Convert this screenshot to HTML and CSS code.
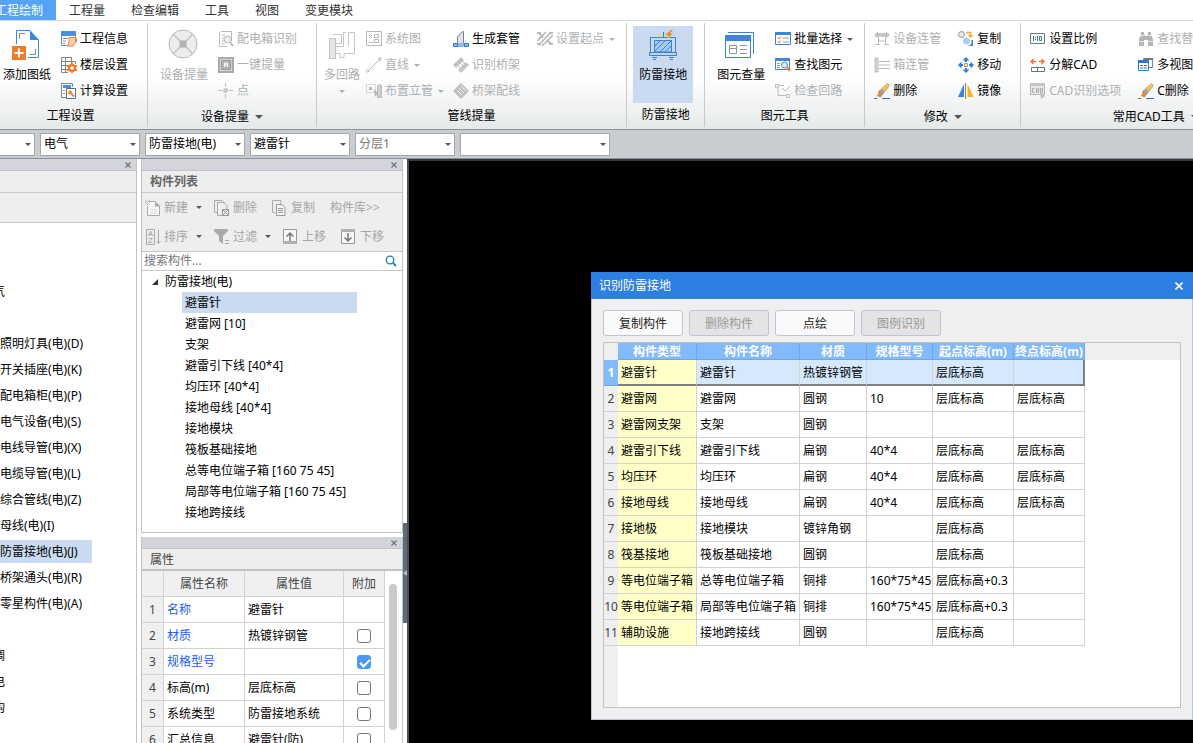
FILE: index.html
```html
<!DOCTYPE html>
<html lang="zh-CN">
<head>
<meta charset="utf-8">
<title>工程绘制</title>
<link rel="stylesheet" href="styles.css">
</head>
<body>
<nav class="tabs">
  <button class="tab active">工程绘制</button><button class="tab">工程量</button><button class="tab">检查编辑</button><button class="tab">工具</button><button class="tab">视图</button><button class="tab">变更模块</button>
</nav>

<div class="ribbon">
  <section class="group g-project">
    <div class="group-body">
      <button class="big"><svg class="i32" viewBox="0 0 32 32"><path d="M5.5 16V2.500H19M27.500 12v17.500H17" fill="none" stroke="#3b8ad8"/><path d="M19 2l9 10h-9z" fill="#3b8ad8"/><path d="M8.500 11V5.500H14M19 26.500h5.500V21" fill="none" stroke="#7a858f"/><path d="M1 18h14v14H1z" fill="#f07c28"/><path d="M8 20.500v9M3.500 25h9" stroke="#fff" stroke-width="2"/></svg><span>添加图纸</span></button>
      <div class="col">
        <button class="cmd"><svg class="i16" viewBox="0 0 16 16"><path d="M.5.500h14V6M.500 0v14.500H6" fill="none" stroke="#5f8fc8"/><path d="M0 0h15v5H0z" fill="#4a90e2"/><path d="M2 7.500h5M2 10h3M2 12.500h2" stroke="#8a949e"/><path d="M8 6.500h6.500v5L12 15H6.500L8 12z" fill="#fbd3b4" stroke="#f07c28"/><path d="M14 6v5h2V8z" fill="#f07c28"/></svg>工程信息</button>
        <button class="cmd"><svg class="i16" viewBox="0 0 16 16"><path d="M.5.500V15.500H7M.500.500h10V6M4.500 1v14M.500 4.500H14.500V7M.500 8.500H8M.500 12.500H7" fill="none" stroke="#7b8791"/><circle cx="11" cy="11" r="3" fill="#fff" stroke="#f07c28" stroke-width="2.400"/><path d="M11 5.500v2M11 14.500v2M6 8.500l2 1M14 12.500l2 1M6 13.500l2-1M14 9.500l2-1" stroke="#f07c28" stroke-width="2"/></svg>楼层设置</button>
        <button class="cmd"><svg class="i16" viewBox="0 0 16 16"><path d="M.500 0.500h11V4M.500 0v14.500H5" fill="none" stroke="#7b8791"/><path d="M2 2h8v3H2z" fill="#4a90e2"/><path d="M2 7.500h2M2 10.500h2" stroke="#f07c28"/><path d="M5.500 5.500h9v10h-9z" fill="#fff" stroke="#5a6f86"/><path d="M8 8l5 5.500" stroke="#f08a30" stroke-width="2"/><path d="M7.500 11l3-3" stroke="#f08a30" stroke-width="2"/></svg>计算设置</button>
      </div>
    </div>
    <h2 class="group-title">工程设置</h2>
  </section>

  <section class="group g-device">
    <div class="group-body">
      <button class="big" disabled><svg class="i32" viewBox="0 0 32 32"><circle cx="15" cy="16" r="14" fill="#ededed" stroke="#b9b9b9"/><path d="M5 6l20 20M25 6L5 26" stroke="#c4c4c4" stroke-width="1.500"/><path d="M11.500 12.500h7v7h-7z" fill="#b3b3b3"/></svg><span>设备提量</span></button>
      <div class="col">
        <button class="cmd" disabled><svg class="i16" viewBox="0 0 16 16"><path d="M3 0.500h10.500V10M3 .500L1.500 2v13.500H9M4 4h3M4 7h2M4 10h2M4 13h3" fill="none" stroke="#bbb"/><circle cx="9.500" cy="8.500" r="3.500" fill="#eee" stroke="#bbb"/><path d="M12 11l3 4" stroke="#bbb" stroke-width="2"/></svg>配电箱识别</button>
        <button class="cmd" disabled><svg class="i16" viewBox="0 0 16 16"><path d="M1 1h14v14H1z" fill="#d5d5d5" stroke="#aaa" stroke-width="2"/><path d="M3.500 3.500h9v9h-9z" fill="#b2b2b2" stroke="#999"/><path d="M6.500 10V6h3v4M6.500 8h3" fill="none" stroke="#fff"/></svg>一键提量</button>
        <button class="cmd" disabled><svg class="i16" viewBox="0 0 16 16"><path d="M7.500 0v4M7.500 11v4M0 7.500h4M11 7.500h4" stroke="#bdbdbd"/><circle cx="7.500" cy="7.500" r="2.500" fill="#c8c8c8"/></svg>点</button>
      </div>
    </div>
    <h2 class="group-title low">设备提量<i class="tri wide"></i></h2>
  </section>

  <section class="group g-pipe">
    <div class="group-body">
      <button class="big" disabled><svg class="i32" viewBox="0 0 32 32"><path d="M3.500 10.500h6v20h-6z" fill="#e6e6e6" stroke="#c2c2c2"/><path d="M7 6.500h8.500v9H10M20 4.500h-2.500v14H10M22.500 18V4.500h6v21H18v4h-4v-4h-4" fill="none" stroke="#c6c6c6"/></svg><span>多回路</span><i class="tri"></i></button>
      <div class="col c-route">
        <button class="cmd" disabled><svg class="i16" viewBox="0 0 16 16"><path d="M.5.500h15v14H.500z" fill="none" stroke="#b8b8b8"/><path d="M8.500 3.500h4v3h-4zM8.500 8.500h4v3h-4zM3 4l3 3M6 4L3 7M3 11.500h5" fill="none" stroke="#b8b8b8"/></svg>系统图</button>
        <button class="cmd" disabled><svg class="i16" viewBox="0 0 16 16"><path d="M2 14L14 2" stroke="#b8b8b8"/><circle cx="1.500" cy="14" r="1.300" fill="#fff" stroke="#b8b8b8"/><circle cx="14" cy="2" r="1.300" fill="#fff" stroke="#b8b8b8"/></svg>直线<i class="tri"></i></button>
        <button class="cmd" disabled><svg class="i16" viewBox="0 0 16 16"><path d="M.5 1.500h9v8h-9z" fill="none" stroke="#b8b8b8" stroke-dasharray="1 1"/><path d="M3 4h3v3H3zM8 6l5 5-2 .500L9 14z" fill="#b8b8b8"/><path d="M11.500 2.500q2-2 4 0v12h-4z" fill="#cfcfcf" stroke="#b8b8b8"/></svg>布置立管<i class="tri"></i></button>
      </div>
      <div class="col c-tray">
        <button class="cmd"><svg class="i16" viewBox="0 0 16 16"><path d="M4.500 12V6l5-5.500h1V12" fill="#e0e3e6" stroke="#76828c"/><path d="M0 12h16v4H0z" fill="#8dbbf0"/><path d="M.5 12.500h4v3h-4zM11.500 12.500h4v3h-4z" fill="none" stroke="#2f78d0"/></svg>生成套管</button>
        <button class="cmd" disabled><svg class="i16" viewBox="0 0 16 16"><path d="M8 0l3 3-8 8-3-3zM13 5l3 3-8 8-3-3z" fill="#c4c4c4"/><path d="M8 3l5 5M3 7l5 5M6 5l5 5" stroke="#bbb"/></svg>识别桥架</button>
        <button class="cmd" disabled><svg class="i16" viewBox="0 0 16 16"><path d="M8 0l8 8-8 8-8-8z" fill="#c0c0c0"/><path d="M8 3l5 5M6 5l5 5M4 7l5 5" stroke="#f6f6f6"/></svg>桥架配线</button>
      </div>
      <div class="col">
        <button class="cmd" disabled><svg class="i16" viewBox="0 0 16 16"><path d="M0 2h4M12 2h4M0 13h4M12 13h4M2 2l4 5M10 9l4 4" stroke="#b8b8b8" stroke-width="2"/><path d="M2 14L14 1M5 15L16 4M0 10L9 1" stroke="#b5b5b5" stroke-width="1.500"/></svg>设置起点<i class="tri"></i></button>
      </div>
    </div>
    <h2 class="group-title">管线提量</h2>
  </section>

  <section class="group g-ground">
    <div class="group-body">
      <button class="big pressed"><svg class="i32" viewBox="0 0 32 32"><path d="M3.500 24V9.500H14M22 9.500h6.500V24" fill="none" stroke="#3b82d0"/><path d="M7.500 12.500h17v11.500h-17z" fill="#a9c9ef" stroke="#3b82d0"/><path d="M8 18l5-5M8 23l10-10M13 24l11-11M18 24l6-6" stroke="#3b82d0"/><path d="M2.500 24.500h27v3h-27z" fill="#b9d3f4" stroke="#3b82d0"/><path d="M5 29.500h5M22 29.500h5M6 31.500h3M23 31.500h3M16.500 4v5M14 9.500h7" stroke="#3b82d0"/><path d="M24 2l-6 5h3.500L19 11l7-5.500h-3.500L26 2z" fill="#f58220"/></svg><span>防雷接地</span></button>
    </div>
    <h2 class="group-title">防雷接地</h2>
  </section>

  <section class="group g-element">
    <div class="group-body">
      <button class="big"><svg class="i32" viewBox="0 0 32 32"><path d="M3 4.500h25.500V26" fill="none" stroke="#3b82d0"/><path d="M.500 7.500h25v22h-25z" fill="#fff" stroke="#3b82d0"/><path d="M0 7h26v6H0z" fill="#3f86d8"/><path d="M4.500 17.500h7v8h-7zM4 20.500h8M15 17.500h7M15 21.500h7M15 25.500h7" fill="none" stroke="#8b969e"/></svg><span>图元查量</span></button>
      <div class="col">
        <button class="cmd"><svg class="i16" viewBox="0 0 16 16"><path d="M.5 1.500h15v12H.500z" fill="#fff" stroke="#3b82d0"/><path d="M0 1h16v3H0z" fill="#3f86d8"/><path d="M2.500 6l1.500 2 2-2.500M2.500 10l1.500 2 2-2.500" fill="none" stroke="#f58220"/><path d="M8 7h6M8 11h6" stroke="#8b969e"/></svg>批量选择<i class="tri dark"></i></button>
        <button class="cmd"><svg class="i16" viewBox="0 0 16 16"><path d="M.5 1.500h14v11H.500z" fill="#fff" stroke="#3b82d0"/><path d="M0 1h15v3H0z" fill="#3f86d8"/><path d="M2 6.500h3M2 8.500h3M2 10.500h3" stroke="#8b969e"/><circle cx="9.500" cy="8" r="3" fill="#dbe9fa" stroke="#5d87bd"/><path d="M12 10.500l3 3" stroke="#f58220" stroke-width="2.500"/></svg>查找图元</button>
        <button class="cmd" disabled><svg class="i16" viewBox="0 0 16 16"><path d="M.5 1.500h3v3h-3zM11.500 11.500h3v3h-3zM3 4.500v8h8M4 2.500h5M7 5l3 3 5-5" fill="none" stroke="#bcbcbc"/></svg>检查回路</button>
      </div>
    </div>
    <h2 class="group-title">图元工具</h2>
  </section>

  <section class="group g-modify">
    <div class="group-body">
      <div class="col c-edit">
        <button class="cmd" disabled><svg class="i16" viewBox="0 0 16 16"><rect x=".5" y="2" width="15" height="4" rx="2" fill="#c8c8c8"/><path d="M3.500 1v6M12.500 1v6M4.500 7v6M11.500 7v6M1 13.500h5M10 13.500h5M4 10h8" stroke="#bcbcbc"/></svg>设备连管</button>
        <button class="cmd" disabled><svg class="i16" viewBox="0 0 16 16"><path d="M1 1h3v14H1z" fill="#d5d5d5" stroke="#bcbcbc"/><path d="M5 4.500h11M5 8h11M5 11.500h11" stroke="#bcbcbc"/></svg>箱连管</button>
        <button class="cmd"><svg class="i16" viewBox="0 0 16 16"><path d="M13.500 0.500l2 2L8 12 4 9z" fill="#f6c455" stroke="#a5803c" stroke-width=".6"/><path d="M7.500 6l3.500 2.500L8 12 4.500 9z" fill="#9aa3ad"/><path d="M5 9l3.500 2.500L6.500 14.500 3 13z" fill="#f58220"/><path d="M0 15.500h3M8 15.500h8" stroke="#2f78d0"/></svg>删除</button>
      </div>
      <div class="col">
        <button class="cmd"><svg class="i16" viewBox="0 0 16 16"><circle cx="3.500" cy="3.500" r="3" fill="#e4e6e8" stroke="#8a949e"/><circle cx="8.500" cy="10" r="3.500" fill="#a9cdf5"/><path d="M13 9a4 4 0 0 1-3 6h5V9z" fill="#3684db"/><path d="M8 1.500h4.500V5M10.500 4l2 2 2-2" fill="none" stroke="#f5a623" stroke-width="1.400"/></svg>复制</button>
        <button class="cmd"><svg class="i16" viewBox="0 0 16 16"><path d="M8 0l3.500 3.500H9V5H7V3.500H4.500zM8 16l3.500-3.500H9V11H7v1.500H4.500zM0 8l3.500-3.500V7H5v2H3.500v2.500zM16 8l-3.500-3.500V7H11v2h1.500v2.500z" fill="#2f7fd8"/><path d="M6.500 6.500h3v3h-3z" fill="#fff" stroke="#f58220"/></svg>移动</button>
        <button class="cmd"><svg class="i16" viewBox="0 0 16 16"><path d="M6 1v13H0z" fill="#3a86d8"/><path d="M9.500 1v13h6z" fill="#fbb117"/><path d="M7.500 0v16" stroke="#7b8791"/></svg>镜像</button>
      </div>
    </div>
    <h2 class="group-title low">修改<i class="tri wide"></i></h2>
  </section>

  <section class="group g-cad">
    <div class="group-body">
      <div class="col c-cad">
        <button class="cmd"><svg class="i16" viewBox="0 0 16 16"><path d="M.5 2.500h14v10H.500z" fill="#fff" stroke="#69788a"/><path d="M3.500 5v5M5.500 6v1M5.500 8v1M7.500 5v5M9.500 5.500h2v4h-2z" fill="none" stroke="#2f78d0"/></svg>设置比例</button>
        <button class="cmd"><svg class="i16" viewBox="0 0 16 16"><path d="M1 4.500h5M9 4.500h5M3.500 2L1 4.500 3.500 7M11.500 2L14 4.500 11.500 7" fill="none" stroke="#f07028" stroke-width="1.300"/><path d="M1.500 10.500h13v4h-13zM7.500 10v4" fill="none" stroke="#5a7696"/></svg>分解CAD</button>
        <button class="cmd" disabled><svg class="i16" viewBox="0 0 16 16"><path d="M.5.500h14v11H.500z" fill="#e8e8e8" stroke="#b6b6b6"/><path d="M0 0h15v3H0z" fill="#c4c4c4"/><path d="M4.500 5.500h-2v4h2M6.500 10V5.500h2V10M6.500 8h2M10.500 5.500h2v4h-2z" fill="none" stroke="#aaa"/><path d="M10 9l5 4-4 3z" fill="#bdbdbd"/></svg>CAD识别选项</button>
      </div>
      <div class="col">
        <button class="cmd" disabled><svg class="i16" viewBox="0 0 16 16"><path d="M3 1h3v2l1 2h2l1-2V1h3v3l2 4v7h-5V9H6v6H1V8l2-4z" fill="#b5b5b5"/><path d="M1 10.500h5M10 10.500h5M3 4.500h3M10 4.500h3" stroke="#e8e8e8"/></svg>查找替换</button>
        <button class="cmd"><svg class="i16" viewBox="0 0 16 16"><path d="M5.500 1.500h9v9h-9z" fill="#fff" stroke="#7b8791"/><path d="M6 1h9v2H6z" fill="#69788a"/><path d="M.5 3.500h10v10H.500z" fill="#fff" stroke="#2f78d0"/><path d="M0 3h11v3H0z" fill="#2f78d0"/><path d="M2 8.500h3M6 8.500h3M2 11h3M6 11h3" stroke="#2f78d0"/></svg>多视图</button>
        <button class="cmd"><svg class="i16" viewBox="0 0 16 16"><path d="M13.500 0.500l2 2L8 12 4 9z" fill="#f6c455" stroke="#a5803c" stroke-width=".6"/><path d="M7.500 6l3.500 2.500L8 12 4.500 9z" fill="#9aa3ad"/><path d="M5 9l3.500 2.500L6.500 14.500 3 13z" fill="#f58220"/><path d="M0 15.500h3M8 15.500h8" stroke="#2f78d0"/></svg>C删除</button>
      </div>
    </div>
    <h2 class="group-title low">常用CAD工具<i class="tri wide"></i></h2>
  </section>
</div>

<div class="combos">
  <span class="combo w-first"><select aria-label="楼层"><option></option></select></span>
  <span class="combo"><select aria-label="专业"><option>电气</option></select></span>
  <span class="combo"><select aria-label="构件类型"><option>防雷接地(电)</option></select></span>
  <span class="combo"><select aria-label="构件"><option>避雷针</option></select></span>
  <span class="combo"><select aria-label="分层" class="muted"><option>分层1</option></select></span>
  <span class="combo w-last"><select aria-label="图元"><option></option></select></span>
</div>

<main class="work">
  <aside class="nav-panel">
    <div class="panel-bar"><button class="close" aria-label="关闭"><svg viewBox="0 0 6 6"><path d="M.5.500l5 5M5.500.500l-5 5"/></svg></button></div>
    <div class="nav-head"></div>
    <div class="nav-tools"></div>
    <ul class="nav-list">
      <li class="cat">电气</li><li></li>
      <li>照明灯具(电)(D)</li><li>开关插座(电)(K)</li><li>配电箱柜(电)(P)</li><li>电气设备(电)(S)</li><li>电线导管(电)(X)</li><li>电缆导管(电)(L)</li><li>综合管线(电)(Z)</li><li>母线(电)(I)</li><li class="on">防雷接地(电)(J)</li><li>桥架通头(电)(R)</li><li>零星构件(电)(A)</li>
      <li></li><li class="cat">空调</li><li class="cat">弱电</li><li class="cat">结构</li>
    </ul>
  </aside>

  <div class="side">
    <section class="panel list-panel">
      <div class="panel-bar"><button class="close" aria-label="关闭"><svg viewBox="0 0 6 6"><path d="M.5.500l5 5M5.500.500l-5 5"/></svg></button></div>
      <h3 class="panel-title bold">构件列表</h3>
      <div class="tools">
        <div class="tool-row">
          <button class="tool drop"><svg class="i16" viewBox="0 0 16 16"><path d="M4 1.500h6l4.500 4.500v9.500H2.500V6" fill="#f8f8f8" stroke="#aaa"/><path d="M10 1l5 5.500h-5z" fill="#aaa"/><path d="M5 9.500h7M5 11.500h7M5 13.500h7" stroke="#ddd"/><path d="M0 0l5 5M5 0L0 5M2.500 0v5M0 2.500h5" stroke="#b5b5b5" stroke-dasharray="1 1"/></svg>新建<i class="tri dark"></i></button>
          <button class="tool"><svg class="i16" viewBox="0 0 16 16"><path d="M3 12.500H.500V.500H8l3 3" fill="none" stroke="#aaa"/><path d="M3.500 2.500H10l3 3V9M3.500 2v13.500H8" fill="none" stroke="#aaa"/><path d="M8.500 9.500h6v6h-6zM9 10l5 5M14 10l-5 5" fill="#eee" stroke="#999"/></svg>删除</button>
          <button class="tool"><svg class="i16" viewBox="0 0 16 16"><path d="M3 12.500H.500V.500H9V4" fill="none" stroke="#aaa"/><path d="M4.500 4.500H10l3 3v8H4.500z" fill="#f5f5f5" stroke="#999"/><path d="M6 8.500h5M6 10.500h5M6 12.500h5" stroke="#999"/></svg>复制</button>
          <button class="tool">构件库&gt;&gt;</button>
        </div>
        <div class="tool-row">
          <button class="tool drop"><svg class="i16" viewBox="0 0 16 16"><path d="M1.500.500h8v15h-8z" fill="none" stroke="#aaa"/><path d="M3.500 7l2-5 2 5M4 5.500h3M3.500 9.500h4l-4 4h4M13.500 1v13M11.500 12l2 2.500 2-2.500" fill="none" stroke="#aaa"/></svg>排序<i class="tri dark"></i></button>
          <button class="tool drop"><svg class="i16" viewBox="0 0 16 16"><path d="M0 0h14v2L9 7v8l-4-3V7L0 2z" fill="#aaa"/><path d="M11 11.500h4M11 14.500h4" stroke="#aaa"/></svg>过滤<i class="tri dark"></i></button>
          <button class="tool"><svg class="i16" viewBox="0 0 16 16"><path d="M.500.500h13v14H.500z" fill="#f7f7f7" stroke="#999"/><path d="M0 12h14v3H0z" fill="#b0b0b0"/><path d="M7 12V4M3.500 7.500L7 4l3.500 3.500" fill="none" stroke="#777" stroke-width="1.500"/></svg>上移</button>
          <button class="tool"><svg class="i16" viewBox="0 0 16 16"><path d="M.500.500h13v14H.500z" fill="#f7f7f7" stroke="#999"/><path d="M0 0h14v3H0z" fill="#b0b0b0"/><path d="M7 4v8M3.500 8.500L7 12l3.500-3.500" fill="none" stroke="#777" stroke-width="1.500"/></svg>下移</button>
        </div>
      </div>
      <div class="search"><input type="text" placeholder="搜索构件..." aria-label="搜索构件"><svg viewBox="0 0 12 12"><circle cx="5" cy="5" r="3.800" fill="none" stroke="#1f7fc0" stroke-width="1.300"/><path d="M8 8l3 3" stroke="#1f7fc0" stroke-width="1.800"/></svg></div>
      <ul class="tree">
        <li class="root"><svg viewBox="0 0 6 6"><path d="M6 0v6H0z" fill="#333"/></svg>防雷接地(电)</li>
        <li class="on">避雷针</li><li>避雷网 [10]</li><li>支架</li><li>避雷引下线 [40*4]</li><li>均压环 [40*4]</li><li>接地母线 [40*4]</li><li>接地模块</li><li>筏板基础接地</li><li>总等电位端子箱 [160 75 45]</li><li>局部等电位端子箱 [160 75 45]</li><li>接地跨接线</li>
      </ul>
    </section>

    <section class="panel prop-panel">
      <div class="panel-bar"><button class="close" aria-label="关闭"><svg viewBox="0 0 6 6"><path d="M.5.500l5 5M5.500.500l-5 5"/></svg></button></div>
      <h3 class="panel-title">属性</h3>
      <div class="prop-body">
        <table class="props">
          <colgroup><col class="p-num"><col class="p-name"><col class="p-val"><col class="p-add"></colgroup>
          <thead><tr><th></th><th>属性名称</th><th>属性值</th><th>附加</th></tr></thead>
          <tbody>
            <tr><th>1</th><td class="key">名称</td><td>避雷针</td><td></td></tr>
            <tr><th>2</th><td class="key">材质</td><td>热镀锌钢管</td><td><input type="checkbox" aria-label="附加 材质"></td></tr>
            <tr><th>3</th><td class="key">规格型号</td><td></td><td><input type="checkbox" checked aria-label="附加 规格型号"></td></tr>
            <tr><th>4</th><td>标高(m)</td><td>层底标高</td><td><input type="checkbox" aria-label="附加 标高"></td></tr>
            <tr><th>5</th><td>系统类型</td><td>防雷接地系统</td><td><input type="checkbox" aria-label="附加 系统类型"></td></tr>
            <tr><th>6</th><td>汇总信息</td><td>避雷针(防)</td><td><input type="checkbox" aria-label="附加 汇总信息"></td></tr>
          </tbody>
        </table>
        <div class="scroll"><div class="thumb"></div></div>
      </div>
    </section>
  </div>

  <div class="splitter"><button class="grip" aria-label="收起"><svg viewBox="0 0 4 6"><path d="M4 0v6L0 3z" fill="#b5bcc4"/></svg></button></div>

  <div class="canvas">
    <section class="dialog" role="dialog" aria-label="识别防雷接地">
      <header class="dialog-bar"><span>识别防雷接地</span><button class="dialog-close" aria-label="关闭"><svg viewBox="0 0 8 8"><path d="M.5.500l7 7M7.500.500l-7 7" stroke="#fff" stroke-width="1.600"/></svg></button></header>
      <div class="dialog-body">
        <div class="actions"><button>复制构件</button><button disabled>删除构件</button><button>点绘</button><button disabled>图例识别</button></div>
        <div class="sheet">
          <table class="grid">
            <colgroup><col class="c-num"><col class="c-type"><col class="c-name"><col class="c-mat"><col class="c-spec"><col class="c-start"><col class="c-end"></colgroup>
            <thead><tr><th class="corner"></th><th>构件类型</th><th>构件名称</th><th>材质</th><th>规格型号</th><th>起点标高(m)</th><th>终点标高(m)</th></tr></thead>
            <tbody>
              <tr class="on"><th>1</th><td>避雷针</td><td>避雷针</td><td>热镀锌钢管</td><td></td><td>层底标高</td><td></td></tr>
              <tr><th>2</th><td>避雷网</td><td>避雷网</td><td>圆钢</td><td>10</td><td>层底标高</td><td>层底标高</td></tr>
              <tr><th>3</th><td>避雷网支架</td><td>支架</td><td>圆钢</td><td></td><td></td><td></td></tr>
              <tr><th>4</th><td>避雷引下线</td><td>避雷引下线</td><td>扁钢</td><td>40*4</td><td>层底标高</td><td>层底标高</td></tr>
              <tr><th>5</th><td>均压环</td><td>均压环</td><td>扁钢</td><td>40*4</td><td>层底标高</td><td>层底标高</td></tr>
              <tr><th>6</th><td>接地母线</td><td>接地母线</td><td>扁钢</td><td>40*4</td><td>层底标高</td><td>层底标高</td></tr>
              <tr><th>7</th><td>接地极</td><td>接地模块</td><td>镀锌角钢</td><td></td><td>层底标高</td><td></td></tr>
              <tr><th>8</th><td>筏基接地</td><td>筏板基础接地</td><td>圆钢</td><td></td><td>层底标高</td><td></td></tr>
              <tr><th>9</th><td>等电位端子箱</td><td>总等电位端子箱</td><td>铜排</td><td>160*75*45</td><td>层底标高+0.3</td><td></td></tr>
              <tr><th>10</th><td>等电位端子箱</td><td>局部等电位端子箱</td><td>铜排</td><td>160*75*45</td><td>层底标高+0.3</td><td></td></tr>
              <tr><th>11</th><td>辅助设施</td><td>接地跨接线</td><td>圆钢</td><td></td><td>层底标高</td><td></td></tr>
            </tbody>
          </table>
        </div>
      </div>
    </section>
  </div>
</main>
</body>
</html>
```

FILE: styles.css
```css
* { box-sizing: border-box; }

body {
  margin: 0;
  height: 100vh;
  display: flex;
  flex-direction: column;
  overflow: hidden;
  background: #fff;
  color: #000;
  font: 12px/16px "Noto Sans", "Noto Sans CJK SC", sans-serif;
}

button, input, select { font: inherit; color: inherit; }
button { margin: 0; padding: 0; border: 0; background: none; white-space: nowrap; }
svg { display: block; flex: none; }
h2, h3, ul { margin: 0; padding: 0; font-size: 12px; font-weight: 400; list-style: none; }

/* Tabs */
.tabs {
  display: flex;
  flex: none;
  height: 21px;
  border-bottom: 1px solid #d8d8d8;
}
.tab { flex: none; padding: 1px 13px 0; line-height: 20px; color: #333; }
.tab:first-child { margin-left: -18px; }
.tab.active { background: #55a3f8; color: #fff; }

/* Ribbon */
.ribbon {
  display: flex;
  flex: none;
  height: 109px;
  padding: 2px 0;
  overflow: hidden;
  background: linear-gradient(#fff 50%, #e6e9ea);
  border-bottom: 1px solid #8c9196;
}
.group { flex: none; border-right: 1px solid #c8cacc; }
.group-body { display: flex; align-items: flex-start; padding: 3px 19px 0 12px; }
.col { display: flex; flex-direction: column; margin-left: 10px; }
.cmd { display: flex; align-items: center; gap: 3px; height: 26px; }
.i16 { width: 16px; height: 16px; }
.i32 { width: 32px; height: 32px; }
.big {
  display: flex;
  flex-direction: column;
  align-items: center;
  height: 77px;
  padding-top: 2px;
}
.big span { margin-top: 7px; }
.big .tri { margin: 7px 0 0; }
button:disabled { color: #adb0b3; }
.tri {
  flex: none;
  width: 0;
  height: 0;
  margin-left: 2px;
  border: 3px solid transparent;
  border-top-color: currentColor;
  border-bottom: 0;
}
.tri.dark { border-top-color: #555; }
.tri.wide { margin-left: 6px; border-width: 4px 4px 0; border-top-color: #555; }
.group-title {
  display: flex;
  align-items: center;
  justify-content: center;
  height: 23px;
}
.group-title.low { height: 26px; }
.g-project { margin-left: -6px; }
.g-project .group-body { padding-left: 9px; }
.g-pipe .group-body { padding-left: 7px; padding-right: 11px; }
.c-route { margin-left: 6px; }
.c-tray { margin-left: 9px; margin-right: 7px; }
.g-ground .group-body { padding-left: 6px; padding-right: 11px; }
.pressed { padding-left: 6px; padding-right: 6px; background: #c9daf1; }
.g-element .group-body { padding-right: 11px; }
.g-modify .group-body, .g-cad .group-body { padding-left: 9px; }
.c-edit, .c-cad { margin-left: 0; margin-right: 7px; }
.g-cad { min-width: 270px; }

/* Filter row */
.combos {
  display: flex;
  flex: none;
  align-items: center;
  gap: 5px;
  height: 29px;
  background: #c9ccd1;
  border-bottom: 1px solid #8c929c;
}
.combo { position: relative; flex: none; width: 100px; height: 23px; }
.combo.w-first { width: 35px; }
.combo.w-last { width: 150px; }
.combo select {
  display: block;
  width: 100%;
  height: 100%;
  padding: 0 3px;
  appearance: none;
  background: #fff;
  border: 1px solid #a5a8ab;
  border-radius: 0;
}
.w-first select { border-left: 0; }
.combo::after {
  content: "";
  position: absolute;
  right: 4px;
  top: 10px;
  border: 3px solid transparent;
  border-top-color: #555;
  border-bottom: 0;
}
.combo .muted { color: #777; }

/* Work area */
.work { display: flex; flex: 1; min-height: 0; }
.panel-bar {
  display: flex;
  flex: none;
  align-items: center;
  justify-content: flex-end;
  height: 12px;
  padding-right: 5px;
  background: #d3d5da;
  border-bottom: 1px solid #c0c3c8;
}
.close svg { width: 6px; height: 6px; }
.close path { stroke: #70757c; stroke-width: 1.3; }

.nav-panel { flex: none; width: 137px; overflow: hidden; border-right: 1px solid #bfc2c6; }
.nav-head, .nav-tools { background: #eee; border-bottom: 1px solid #c6c8cb; }
.nav-head { height: 22px; }
.nav-tools { height: 30px; }
.nav-list { padding-top: 57px; }
.nav-list li { height: 23px; margin-bottom: 3px; line-height: 23px; white-space: nowrap; }
.nav-list .cat { margin-left: -19px; }
.nav-list .on { width: 92px; background: #c9daf1; }

.side { display: flex; flex: none; flex-direction: column; gap: 4px; width: 262px; margin-left: 4px; }
.panel { display: flex; flex: none; flex-direction: column; border: 1px solid #bfc2c6; border-top: 0; }
.list-panel { height: 374px; }
.panel-title { flex: none; height: 22px; padding-left: 8px; line-height: 22px; background: #eee; border-bottom: 1px solid #c6c8cb; color: #444; }
.panel-title.bold { font-weight: 700; color: #666; }
.tools { flex: none; padding: 0 3px; background: #eee; border-bottom: 1px solid #c6c8cb; }
.tool-row { display: flex; height: 29px; }
.tool { display: flex; align-items: center; gap: 3px; margin-right: 15px; color: #a5a5a5; }
.tool.drop { margin-right: 12px; }
.tool .tri { margin-left: 5px; }
.search { display: flex; flex: none; align-items: center; height: 19px; padding-right: 5px; border-bottom: 1px solid #c6c8cb; }
.search input { flex: 1; min-width: 0; padding: 0 2px; border: 0; outline: 0; background: none; }
.search input::placeholder { color: #777; opacity: 1; }
.search svg { width: 12px; height: 12px; }
.tree li { width: 175px; height: 21px; margin-left: 40px; padding-left: 3px; line-height: 21px; white-space: nowrap; }
.tree .root { display: flex; align-items: center; gap: 7px; margin-left: 7px; }
.tree .root svg { width: 6px; height: 6px; }
.tree .on { background: #c9daf1; }

.prop-panel { flex: 1 0 auto; border-bottom: 0; }
.prop-panel .panel-title { border-bottom: 2px solid #c0c3c8; }
.prop-body { display: flex; }
table { table-layout: fixed; border-collapse: separate; border-spacing: 0; }
th, td { padding: 0; overflow: hidden; white-space: nowrap; font-weight: 400; text-align: left; }
.props { flex: none; width: 243px; }
.p-num { width: 22px; }
.p-name { width: 81px; }
.p-val { width: 99px; }
.p-add { width: 41px; }
.props th, .props td { height: 26px; border-right: 1px solid #d2d2d2; border-bottom: 1px solid #d2d2d2; }
.props th { text-align: center; background: #f0f0f0; color: #444; }
.props td { padding-left: 3px; }
.props .key { color: #1a5cff; }
.props td:last-child { padding: 0; }
.props input {
  display: block;
  position: relative;
  width: 14px;
  height: 14px;
  margin: 0 auto;
  appearance: none;
  background: #fff;
  border: 1px solid #777;
  border-radius: 3px;
}
.props input:checked { background: #4a9af5; border-color: #4a9af5; }
.props input:checked::after {
  content: "";
  position: absolute;
  left: 4px;
  top: 1px;
  width: 4px;
  height: 8px;
  border: solid #fff;
  border-width: 0 2px 2px 0;
  transform: rotate(45deg);
}
.scroll { flex: 1; padding: 13px 5px 0 4px; }
.thumb { height: 146px; border-radius: 4px; background: #cbcbcb; }

.splitter { flex: none; width: 4px; }
.grip {
  display: flex;
  align-items: center;
  width: 4px;
  height: 100px;
  margin-top: 364px;
  background: #5f6b78;
}
.grip svg { width: 4px; height: 6px; }

.canvas {
  position: relative;
  flex: 1;
  min-width: 0;
  background: #000;
  border-top: 2px solid #33383b;
  border-left: 2px solid #4a5055;
}

/* Floating dialog */
.dialog {
  position: absolute;
  left: 182px;
  right: 0;
  top: 111px;
  background: #efefef;
  border: 1px solid #bcc5d6;
  border-top: 0;
}
.dialog-bar {
  display: flex;
  align-items: center;
  justify-content: space-between;
  height: 27px;
  margin: 0 -1px;
  padding: 0 10px 0 8px;
  background: #2d7fe1;
  color: #fff;
}
.dialog-close svg { width: 8px; height: 8px; }
.dialog-body { padding: 11px; }
.actions { display: flex; gap: 6px; margin-bottom: 6px; }
.actions button { width: 80px; height: 26px; padding-top: 1px; border: 1px solid #bcc5d6; border-radius: 3px; background: #fafafa; color: #222; }
.actions button:disabled { background: #e4e4e4; color: #999; }
.sheet {
  height: 366px;
  border: 1px solid #c2c2c2;
  background: linear-gradient(#efefef, #efefef) 0 0 / 100% 17px no-repeat, linear-gradient(#efefef, #efefef) 0 0 / 14px 100% no-repeat, #fff;
}
.grid { width: 481px; }
.c-num { width: 14px; }
.c-type { width: 79px; }
.c-name { width: 103px; }
.c-mat { width: 67px; }
.c-spec { width: 66px; }
.c-start { width: 81px; }
.c-end { width: 71px; }
.grid td, .grid tbody th { height: 26px; border-right: 1px solid #d2d2d2; border-bottom: 1px solid #d2d2d2; }
.grid td { padding-left: 3px; overflow: visible; }
.grid td:nth-child(2) { background: #ffffc8; }
.grid tbody th { overflow: visible; text-align: center; background: #efefef; color: #444; border-right: 0; }
.grid thead th {
  height: 17px;
  padding-top: 1px;
  line-height: 15px;
  overflow: visible;
  font-weight: 700;
  text-align: center;
  color: #fff;
  background: #82bafb;
  border-right: 1px solid #68a8ee;
  border-bottom: 1px solid #68a8ee;
}
.grid thead .corner { background: #efefef; border-color: #efefef; }
.grid .on td { padding-top: 2px; background: #d5e8fe; border-bottom: 2px solid #808080; }
.grid .on td:nth-child(2) { background: #ffffc8; }
.grid .on td:last-child { border-right: 2px solid #808080; }
.grid tbody .on th { background: #82bafb; color: #fff; font-weight: 700; border-bottom-color: #68a8ee; }
```
